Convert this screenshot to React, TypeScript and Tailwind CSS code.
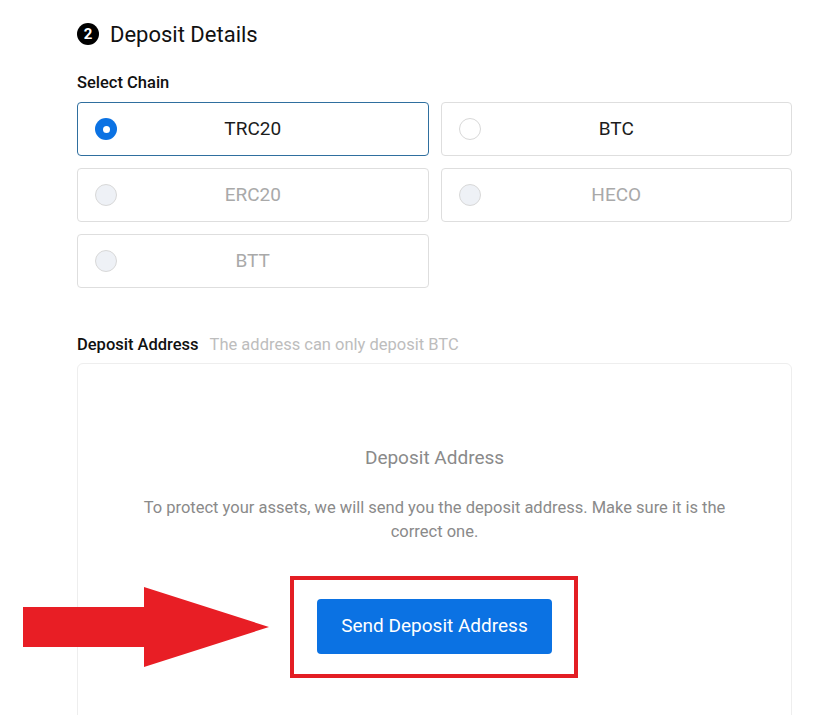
import React from "react"

type Chain = { name: string; selected?: boolean; disabled?: boolean }

const chains: Chain[] = [
  { name: "TRC20", selected: true },
  { name: "BTC" },
  { name: "ERC20", disabled: true },
  { name: "HECO", disabled: true },
  { name: "BTT", disabled: true },
]

const ChainOption: React.FC<{ chain: Chain }> = ({ chain }) => {
  const border = chain.selected ? "border-[#2f6f9f]" : "border-[#dedede]"
  return (
    <div className={`relative flex h-[54px] items-center justify-center rounded-[4px] border bg-white ${border}`}>
      <span className="absolute left-[17px] top-1/2 -translate-y-1/2">
        {chain.selected ? (
          <span className="flex h-[22px] w-[22px] items-center justify-center rounded-full bg-[#0b72e3]">
            <span className="h-[7px] w-[7px] rounded-full bg-white" />
          </span>
        ) : (
          <span
            className={`block h-[22px] w-[22px] rounded-full border border-[#d8d8d8] ${
              chain.disabled ? "bg-[#eef1f6]" : "bg-white"
            }`}
          />
        )}
      </span>
      <span className={`text-[19px] ${chain.disabled ? "text-[#a9a9a9]" : "text-[#1c1c1c]"}`}>{chain.name}</span>
    </div>
  )
}

export default function App() {
  return (
    <div className="relative h-[715px] w-[824px] overflow-hidden bg-white font-['Roboto',sans-serif]">
      <div className="ml-[77px] w-[715px] pt-[20px]">
        <div className="flex h-[28px] items-center gap-[11px]">
          <span className="flex h-[22px] w-[22px] items-center justify-center rounded-full bg-black text-[15px] font-bold text-white">
            2
          </span>
          <h2 className="text-[22px] text-[#111]">Deposit Details</h2>
        </div>

        <div className="mt-[25px] text-[16.5px] font-medium leading-[20px] text-[#111]">Select Chain</div>

        <div className="mt-[9px] grid grid-cols-2 gap-x-[12px] gap-y-[12px]">
          {chains.map((c) => (
            <ChainOption key={c.name} chain={c} />
          ))}
        </div>

        <div className="mt-[47px] flex items-baseline gap-[11px] leading-[20px]">
          <span className="text-[16.5px] font-medium text-[#111]">Deposit Address</span>
          <span className="text-[16.5px] text-[#bdbdbd]">The address can only deposit BTC</span>
        </div>

        <div className="mt-[8px] h-[400px] rounded-[6px] border border-[#eeeeee] pt-[82px]">
          <div className="text-center text-[19px] leading-[24px] text-[#8a8a8a]">Deposit Address</div>
          <p className="mx-auto mt-[26px] max-w-[600px] text-center text-[16.5px] leading-[24px] text-[#8a8a8a]">
            To protect your assets, we will send you the deposit address. Make sure it is the correct one.
          </p>
          <div className="mt-[55px] flex justify-center">
            <button className="h-[55px] w-[235px] rounded-[4px] bg-[#0b72e3] text-[19px] text-white">
              Send Deposit Address
            </button>
          </div>
        </div>
      </div>

      {/* annotation overlay */}
      <div className="absolute left-[290px] top-[576px] h-[102px] w-[288px] border-[4px] border-[#e31e24]" />
      <svg className="absolute left-[20px] top-[584px]" width="252" height="86" viewBox="0 0 252 86">
        <path d="M3 23 H124 V3 L249 43 L124 83 V63 H3 Z" fill="#e81e25" />
      </svg>
    </div>
  )
}
